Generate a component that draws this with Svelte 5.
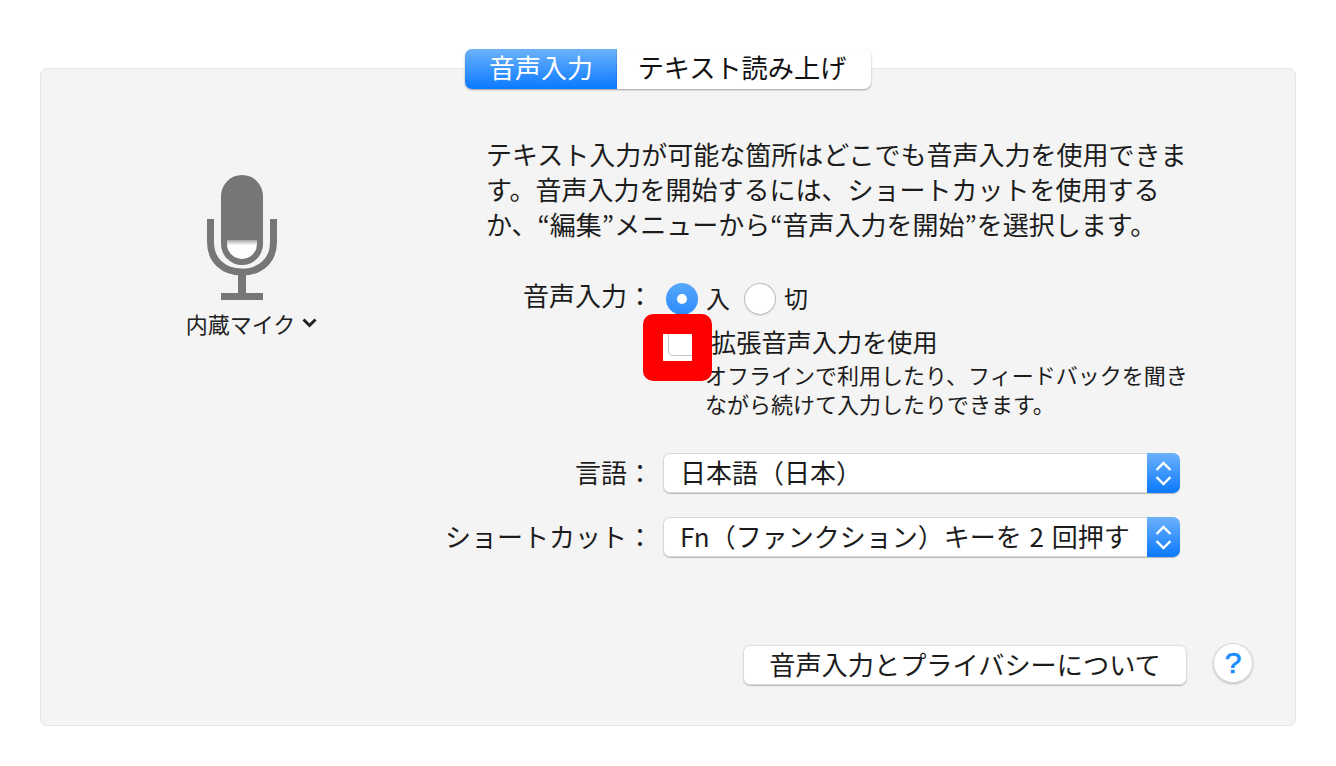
<script>
  let activeTab = $state('dictation');
  let dictationOn = $state(true);
  let enhanced = $state(false);
</script>

<div class="page">
  <div class="tabs">
    <button class="tab first" class:active={activeTab === 'dictation'} onclick={() => (activeTab = 'dictation')}>音声入力</button>
    <button class="tab last" class:active={activeTab === 'speech'} onclick={() => (activeTab = 'speech')}>テキスト読み上げ</button>
  </div>

  <section class="panel">
    <div class="columns">
      <div class="mic-col">
        <svg class="mic" width="72" height="126" viewBox="0 0 72 126" aria-hidden="true">
          <defs>
            <linearGradient id="level" x1="0" y1="0" x2="0" y2="1">
              <stop offset="0" stop-color="#a8a8a8" />
              <stop offset="0.28" stop-color="#fff" />
            </linearGradient>
          </defs>
          <rect x="15" y="1" width="42" height="90" rx="21" fill="#767676" />
          <path d="M21 66 H51 V70 A15 15 0 0 1 21 70 Z" fill="url(#level)" />
          <path d="M4.500 45 V68 C4.500 87 18 98 36 98 C54 98 67.500 87 67.500 68 V45" fill="none" stroke="#767676" stroke-width="7" />
          <rect x="32" y="98" width="8" height="22" fill="#767676" />
          <rect x="15" y="119" width="42" height="7" fill="#767676" />
        </svg>
        <div class="mic-label">
          内蔵マイク
          <svg width="15" height="10" viewBox="0 0 15 10" aria-hidden="true">
            <path d="M1.500 1.500 L7.500 7.500 L13.500 1.500" fill="none" stroke="#222" stroke-width="3" />
          </svg>
        </div>
      </div>

      <div class="form">
        <p class="intro">
          テキスト入力が可能な箇所はどこでも音声入力を使用できま<br />
          す。音声入力を開始するには、ショートカットを使用する<br />
          か、“編集”メニューから“音声入力を開始”を選択します。
        </p>

        <div class="row radio-row">
          <div class="label">音声入力：</div>
          <div class="radios">
            <button class="radio" class:on={dictationOn} aria-label="入" onclick={() => (dictationOn = true)}></button>
            <span class="radio-text">入</span>
            <button class="radio second" class:on={!dictationOn} aria-label="切" onclick={() => (dictationOn = false)}></button>
            <span class="radio-text">切</span>
          </div>
        </div>

        <div class="row">
          <div class="label"></div>
          <div class="enhanced">
            <div class="check-title">拡張音声入力を使用</div>
            <div class="check-desc">
              オフラインで利用したり、フィードバックを聞き<br />
              ながら続けて入力したりできます。
            </div>
            <button class="redact" aria-label="拡張音声入力を使用" onclick={() => (enhanced = !enhanced)}>
              <span class="patch"><span class="box"></span></span>
            </button>
          </div>
        </div>

        <div class="row select-row">
          <div class="label">言語：</div>
          <div class="select">
            <span class="select-value">日本語（日本）</span>
            <span class="stepper">
              <svg width="17" height="29" viewBox="0 0 17 29" aria-hidden="true">
                <path d="M1.500 11 L8.500 4 L15.500 11 M1.500 18 L8.500 25 L15.500 18" fill="none" stroke="#fff" stroke-width="2.400" />
              </svg>
            </span>
          </div>
        </div>

        <div class="row select-row second-select">
          <div class="label">ショートカット：</div>
          <div class="select">
            <span class="select-value">Fn（ファンクション）キーを 2 回押す</span>
            <span class="stepper">
              <svg width="17" height="29" viewBox="0 0 17 29" aria-hidden="true">
                <path d="M1.500 11 L8.500 4 L15.500 11 M1.500 18 L8.500 25 L15.500 18" fill="none" stroke="#fff" stroke-width="2.400" />
              </svg>
            </span>
          </div>
        </div>

        <div class="footer">
          <button class="about">音声入力とプライバシーについて</button>
          <button class="help" aria-label="ヘルプ">?</button>
        </div>
      </div>
    </div>
  </section>
</div>

<style>
  :global(body) {
    background: #fff;
  }

  .page {
    box-sizing: border-box;
    height: 766px;
    padding: 49px 40px 0;
    font-family: "Noto Sans CJK JP", "Noto Sans", sans-serif;
    color: #1c1c1c;
    overflow: hidden;
  }

  button {
    font-family: inherit;
    margin: 0;
    padding: 0;
    border: none;
    cursor: pointer;
  }

  .tabs {
    display: flex;
    justify-content: center;
    position: relative;
    z-index: 1;
    margin-bottom: -21px;
  }

  .tab {
    box-sizing: border-box;
    height: 40px;
    padding-bottom: 4px;
    font-size: 26px;
    line-height: 36px;
    background: #fff;
    color: #111;
    box-shadow: 0 1px 2px rgba(0, 0, 0, 0.35);
  }

  .tab.first {
    width: 152px;
    border-radius: 7px 0 0 7px;
  }

  .tab.last {
    width: 254px;
    padding-right: 4px;
    font-size: 26.200px;
    border-radius: 0 7px 7px 0;
  }

  .tab.active {
    background: linear-gradient(#6cb2fb, #0a79ff);
    color: #fff;
  }

  .panel {
    box-sizing: border-box;
    height: 658px;
    background: #f4f4f4;
    border: 1px solid #e6e6e6;
    border-radius: 7px;
  }

  .columns {
    display: grid;
    grid-template-columns: 403px 1fr;
  }

  .mic-col {
    display: flex;
    flex-direction: column;
    align-items: center;
    padding-top: 105px;
  }

  .mic {
    display: block;
    margin-right: 2px;
  }

  .mic-label {
    display: flex;
    align-items: center;
    gap: 7px;
    margin: 7px 0 0 18px;
    font-size: 22px;
    line-height: 32px;
    color: #222;
  }

  .form {
    padding-top: 67px;
  }

  .intro {
    margin: 0 0 42px 42px;
    font-size: 26px;
    line-height: 35px;
    white-space: nowrap;
  }

  .row {
    display: grid;
    grid-template-columns: 219px 517px;
    align-items: start;
  }

  .label {
    box-sizing: border-box;
    padding-right: 10px;
    margin-top: -2px;
    text-align: right;
    font-size: 26px;
    line-height: 32px;
  }

  .radio-row .label {
    margin-top: -4px;
  }

  .radio-row {
    margin-bottom: 10px;
    height: 32px;
  }

  .radios {
    display: flex;
    align-items: center;
    padding-left: 3px;
    height: 32px;
  }

  .radio {
    width: 32px;
    height: 32px;
    flex: none;
    border-radius: 50%;
    background: #fff;
    box-shadow: inset 0 0 0 1px #bcbcbc, 0 1px 1px rgba(0, 0, 0, 0.08);
    position: relative;
  }

  .radio.on {
    background: linear-gradient(#59a8fb, #2a8afc);
    box-shadow: none;
  }

  .radio.on::after {
    content: "";
    position: absolute;
    left: 11px;
    top: 11px;
    width: 10px;
    height: 10px;
    border-radius: 50%;
    background: #fff;
  }

  .radio.second {
    margin-left: 14px;
  }

  .radio-text {
    margin-left: 8px;
    font-size: 24px;
    line-height: 30px;
    padding-bottom: 2px;
  }

  .enhanced {
    position: relative;
    padding-left: 43px;
  }

  .check-title {
    padding-left: 5px;
    font-size: 25.200px;
    line-height: 32px;
    margin-bottom: 3px;
  }

  .check-desc {
    font-size: 22px;
    line-height: 29px;
    white-space: nowrap;
    margin-left: -1px;
    margin-bottom: 1px;
  }

  .redact {
    position: absolute;
    left: -20px;
    top: -11px;
    width: 69px;
    height: 67px;
    background: #fe0000;
    border-radius: 10px;
  }

  .patch {
    position: absolute;
    left: 20px;
    top: 20px;
    width: 29px;
    height: 27px;
    background: #fff;
    overflow: hidden;
  }

  .box {
    position: absolute;
    left: 5px;
    top: -6px;
    width: 32px;
    height: 28px;
    border: 1px solid #c4c4c4;
    border-radius: 5px;
    box-sizing: border-box;
  }

  .select-row {
    margin-top: 34px;
    align-items: center;
  }

  .second-select {
    margin-top: 24px;
  }

  .select {
    display: flex;
    align-items: stretch;
    height: 40px;
    background: #fff;
    border-radius: 7px;
    box-shadow: 0 0 0 1px #d8d8d8 inset, 0 1px 1px rgba(0, 0, 0, 0.25);
    overflow: hidden;
  }

  .select-value {
    flex: 1;
    padding-left: 17px;
    font-size: 26px;
    line-height: 37px;
    word-spacing: 2px;
    white-space: nowrap;
  }

  .stepper {
    flex: none;
    width: 33px;
    display: flex;
    align-items: center;
    justify-content: center;
    background: linear-gradient(#6cb2fb, #0a79ff);
  }

  .footer {
    display: flex;
    align-items: center;
    margin: 88px 0 0 299px;
    gap: 26px;
  }

  .about {
    box-sizing: border-box;
    width: 444px;
    height: 40px;
    padding-bottom: 3px;
    background: #fff;
    color: #1c1c1c;
    font-size: 26.200px;
    line-height: 36px;
    border-radius: 7px;
    box-shadow: inset 0 0 0 1px #dcdcdc, 0 1px 1px rgba(0, 0, 0, 0.25);
  }

  .help {
    width: 40px;
    height: 40px;
    margin-top: -4px;
    border-radius: 50%;
    background: #fff;
    color: #1a8cff;
    font-family: "Liberation Sans", sans-serif;
    font-size: 30px;
    font-weight: 400;
    -webkit-text-stroke: 0.700px #1a8cff;
    line-height: 40px;
    box-shadow: inset 0 0 0 1px #d4d4d4, 0 1px 2px rgba(0, 0, 0, 0.25);
  }
</style>
